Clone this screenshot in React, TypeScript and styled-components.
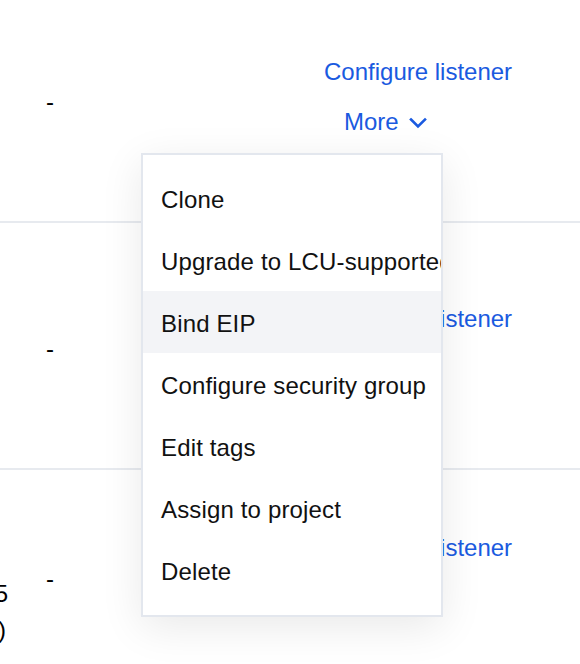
import React from "react";
import styled, { createGlobalStyle } from "styled-components";

const Global = createGlobalStyle`
  html, body { margin: 0; padding: 0; background: #fff; }
  body {
    width: 580px;
    height: 664px;
    overflow: hidden;
    font-family: "Liberation Sans", Arial, Helvetica, sans-serif;
    font-size: 24px;
    line-height: 36px;
    color: #000;
  }
  * { box-sizing: border-box; }
`;

const Page = styled.div`
  position: relative;
  width: 580px;
  height: 664px;
  overflow: hidden;
`;

const Table = styled.div`
  margin-top: -24px;
  display: flex;
  flex-direction: column;
`;

const Row = styled.div<{ $minHeight?: number; $padTop?: number }>`
  display: grid;
  grid-template-columns: 46px 278px 1fr;
  align-items: center;
  padding: ${(p) => p.$padTop ?? 36}px 0 36px;
  min-height: ${(p) => (p.$minHeight ? `${p.$minHeight}px` : "auto")};
  border-bottom: 2px solid #e7eaef;
`;

const LeftCell = styled.div`
  width: 8px;
  overflow: hidden;
  display: flex;
  flex-direction: column;
  align-items: flex-end;
`;

const LeftLine = styled.div<{ $inset?: number }>`
  white-space: nowrap;
  padding-right: ${(p) => p.$inset ?? 0}px;
`;

const DashCell = styled.div`
  padding-top: 6px;
`;

const Actions = styled.div<{ $lift: number }>`
  display: flex;
  flex-direction: column;
  align-items: flex-start;
  gap: 14px;
  margin-bottom: ${(p) => p.$lift}px;
`;

const Link = styled.a<{ $indent?: number }>`
  display: inline-flex;
  align-items: center;
  gap: 10px;
  color: #1a5ae0;
  text-decoration: none;
  white-space: nowrap;
  cursor: pointer;
  margin-left: ${(p) => p.$indent ?? 0}px;
`;

const Chevron = styled.svg`
  width: 18px;
  height: 12px;
  margin-top: 2px;
`;

const Menu = styled.ul`
  position: absolute;
  left: 141px;
  top: 153px;
  width: 302px;
  margin: 0;
  padding: 12px 0 14px;
  list-style: none;
  background: #fff;
  border: 2px solid #e3e7ee;
  box-shadow: 0 10px 40px rgba(0, 0, 0, 0.09);
  overflow: hidden;
`;

const MenuItem = styled.li<{ $active?: boolean }>`
  height: 62px;
  padding: 15px 0 11px 18px;
  white-space: nowrap;
  overflow: hidden;
  letter-spacing: 0.15px;
  color: #111;
  background: ${(p) => (p.$active ? "#f3f4f7" : "transparent")};
  cursor: pointer;
`;

const ChevronIcon = () => (
  <Chevron viewBox="0 0 18 12" fill="none">
    <path d="M2 2.5 L9 9.5 L16 2.5" stroke="#1a5ae0" strokeWidth="2.6" strokeLinecap="square" />
  </Chevron>
);

const ActionLinks = ({ lift }: { lift: number }) => (
  <Actions $lift={lift}>
    <Link>Configure listener</Link>
    <Link $indent={20}>
      More
      <ChevronIcon />
    </Link>
  </Actions>
);

const menuItems = [
  "Clone",
  "Upgrade to LCU-supported CLB",
  "Bind EIP",
  "Configure security group",
  "Edit tags",
  "Assign to project",
  "Delete",
];

export default function App() {
  return (
    <>
      <Global />
      <Page>
        <Table>
          <Row $minHeight={247}>
            <LeftCell />
            <DashCell>-</DashCell>
            <ActionLinks lift={3} />
          </Row>
          <Row $minHeight={247}>
            <LeftCell />
            <DashCell>-</DashCell>
            <ActionLinks lift={3} />
          </Row>
          <Row $padTop={34}>
            <LeftCell>
              <LeftLine $inset={40}>Guangzhou</LeftLine>
              <LeftLine $inset={40}>Zone 3</LeftLine>
              <LeftLine>Zone 5</LeftLine>
              <LeftLine $inset={2}>(Secondary)</LeftLine>
            </LeftCell>
            <DashCell>-</DashCell>
            <ActionLinks lift={6} />
          </Row>
        </Table>
        <Menu>
          {menuItems.map((item) => (
            <MenuItem key={item} $active={item === "Bind EIP"}>
              {item}
            </MenuItem>
          ))}
        </Menu>
      </Page>
    </>
  );
}
